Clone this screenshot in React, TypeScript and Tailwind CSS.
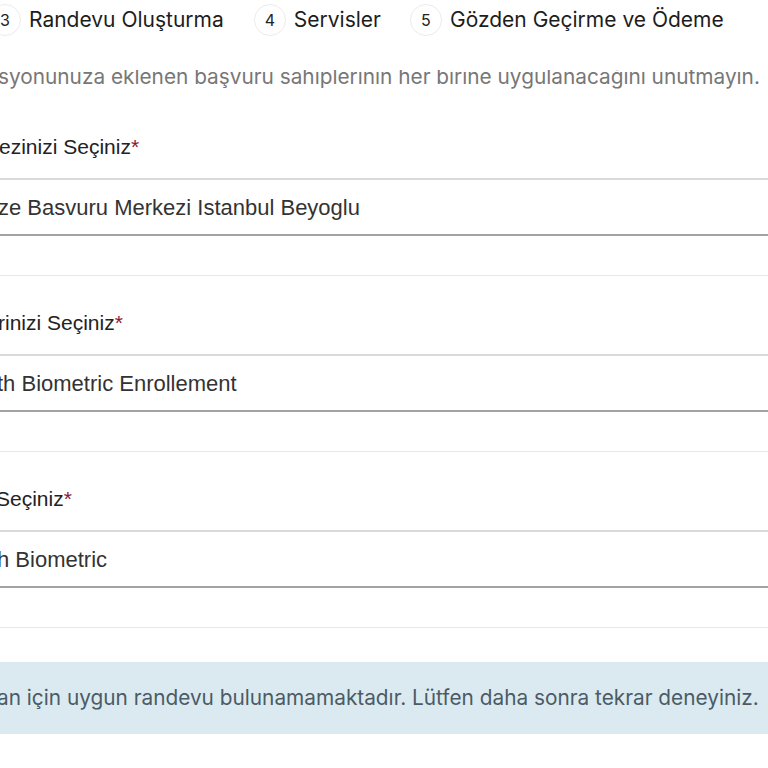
const steps = [
  { n: 3, label: 'Randevu Oluşturma', offset: '-ml-[11px]' },
  { n: 4, label: 'Servisler', offset: 'ml-[30px]' },
  { n: 5, label: 'Gözden Geçirme ve Ödeme', offset: 'ml-[29px]' },
];

const fields = [
  { label: 'ezinizi Seçiniz', value: 'ze Basvuru Merkezi Istanbul Beyoglu', shift: '-ml-px', vshift: '-ml-[2px]' },
  { label: 'rinizi Seçiniz', value: 'th Biometric Enrollement', shift: '-ml-[2px]', vshift: '-ml-[3px]' },
  { label: 'Seçiniz', value: 'h Biometric', shift: '-ml-[4px]', vshift: '-ml-[3px]' },
];

function Field({ label, value, shift, vshift }: { label: string; value: string; shift: string; vshift: string }) {
  return (
    <div className="flex flex-col">
      <label className={`${shift} h-[28px] text-[21px] leading-[28px] text-[#222] font-['Liberation_Sans',Arial,sans-serif]`}>
        {label}
        <span className="text-[#8a1538]">*</span>
      </label>
      <div className="mt-[17px] flex h-[58px] items-center border-t-2 border-b-2 border-t-[#dadada] border-b-[#a3a3a3] bg-white">
        <span className={`${vshift} text-[22px] text-[#333] font-['Liberation_Sans',Arial,sans-serif]`}>{value}</span>
      </div>
      <div className="mt-[39px] border-t border-[#e8e8e8]" />
    </div>
  );
}

export default function App() {
  return (
    <div className="relative h-[768px] w-[768px] overflow-hidden bg-white font-['Inter',sans-serif]">
      <div className="relative z-10 flex h-[70px] items-start bg-white pt-[4px]">
        {steps.map(step => (
          <div key={step.n} className={`${step.offset} flex items-center gap-[8px]`}>
            <span className="flex h-[32px] w-[32px] shrink-0 items-center justify-center rounded-full border border-[#ececec] text-[16px] text-[#222]">
              {step.n}
            </span>
            <span className="text-[21px] leading-[32px] text-[#1d1d1d]">{step.label}</span>
          </div>
        ))}
      </div>

      <p className="-mt-[7px] -ml-[2px] whitespace-nowrap text-[20.8px] leading-[28px] text-[#777]">
        syonunuza eklenen başvuru sahiplerinin her birine uygulanacağını unutmayın.
      </p>

      <div className="mt-[42px] flex flex-col gap-[33px]">
        {fields.map(f => (
          <Field key={f.label} {...f} />
        ))}
      </div>

      <div className="mt-[34px] flex h-[72px] items-center bg-[#dbeaf0]">
        <p className="-ml-[3px] whitespace-nowrap text-[20.8px] text-[#4b5b66]">
          an için uygun randevu bulunamamaktadır. Lütfen daha sonra tekrar deneyiniz.
        </p>
      </div>
    </div>
  );
}
